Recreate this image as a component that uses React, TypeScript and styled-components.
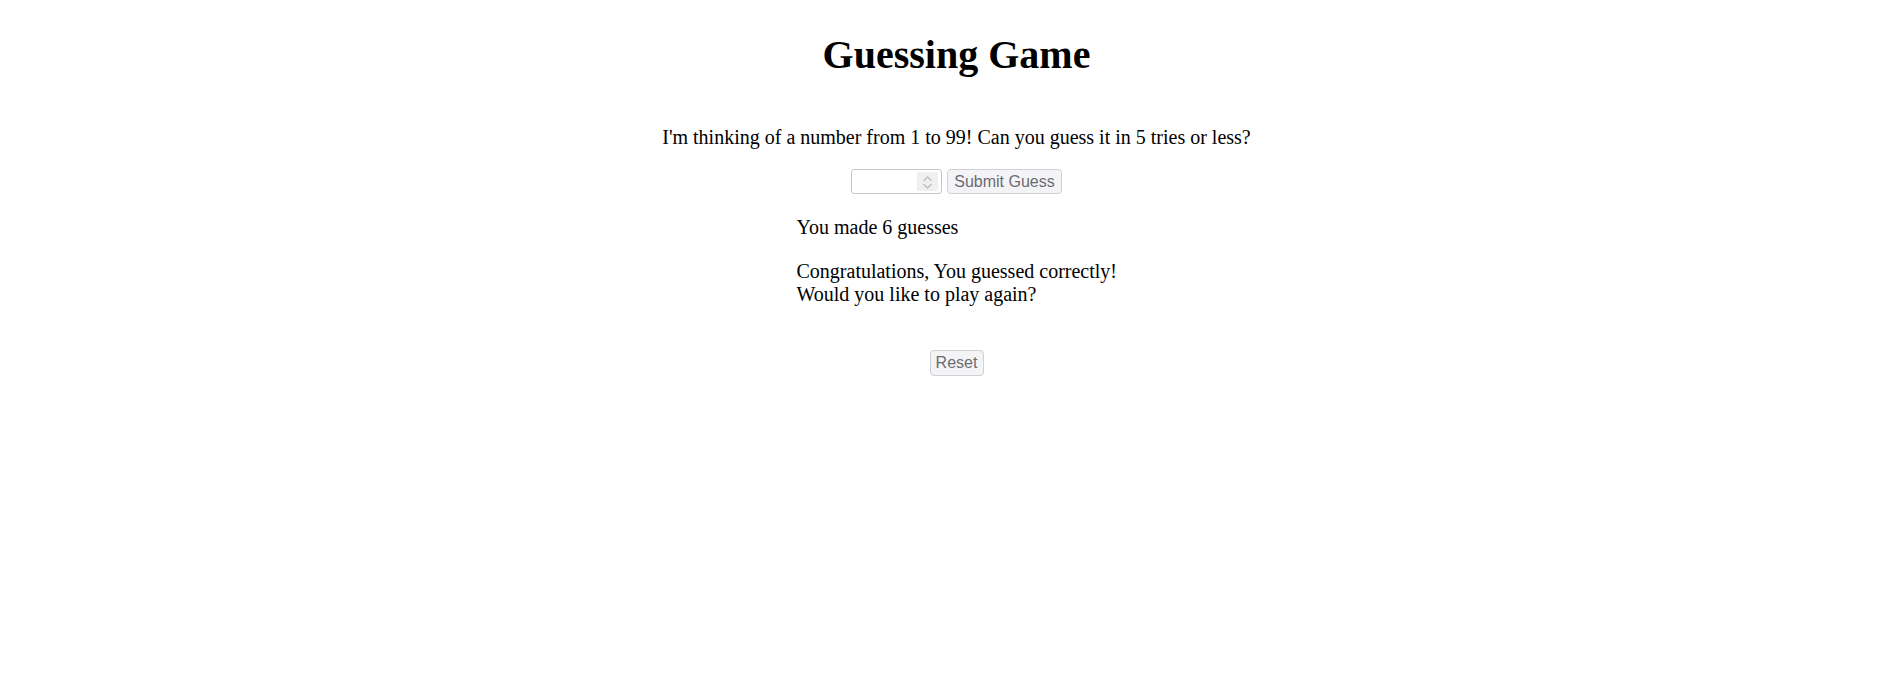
import * as React from "react";
import styled, { createGlobalStyle } from "styled-components";

const GlobalStyle = createGlobalStyle`
  body {
    margin: 0;
    background: #ffffff;
    color: #000000;
    font-family: "Liberation Serif", "Times New Roman", serif;
  }
`;

const GameContainer = styled.section`
  display: flex;
  flex-direction: column;
  align-items: center;
  padding: 32px 0 0 34px;
`;

const Title = styled.h1`
  margin: 0;
  font-size: 40px;
  line-height: 46px;
  font-weight: bold;
`;

const Intro = styled.p`
  margin: 48px 0 0;
  font-size: 20px;
  line-height: 23px;
`;

const GuessForm = styled.form`
  display: flex;
  gap: 5px;
  margin-top: 20px;
  height: 25px;
`;

const NumberField = styled.div`
  box-sizing: border-box;
  display: flex;
  width: 91px;
  height: 25px;
  padding: 2px 3px 2px 2px;
  border: 1px solid #c6c6cc;
  border-radius: 3px;
  background: #ffffff;
`;

const NumberInput = styled.input`
  flex: 1 1 0;
  width: 0;
  min-width: 0;
  border: none;
  outline: none;
  background: transparent;
  font-family: "Liberation Sans", Arial, sans-serif;
  font-size: 16px;
  padding: 0 2px;
`;

const Spinner = styled.div`
  flex: none;
  width: 21px;
  background: #f0f0f2;
  display: flex;
  align-items: center;
  justify-content: center;
`;

const GameButton = styled.button<{ $width: number; $height: number }>`
  box-sizing: border-box;
  width: ${(p) => p.$width}px;
  height: ${(p) => p.$height}px;
  padding: 0;
  font-family: "Liberation Sans", Arial, sans-serif;
  font-size: 16px;
  color: #6b6b73;
  background: #f4f4f6;
  border: 1px solid #d0d0d6;
  border-radius: 4px;
`;

const Results = styled.div`
  width: 320px;
  margin-top: 22px;
  text-align: left;
  white-space: nowrap;
  font-size: 20px;
  line-height: 23px;
`;

const ResultLine = styled.p<{ $gap?: number }>`
  margin: ${(p) => p.$gap ?? 0}px 0 0;
`;

const ResetRow = styled.div`
  margin-top: 44px;
`;

const SpinnerIcon = () => (
  <svg width="21" height="21" viewBox="0 0 21 21" fill="none">
    <polyline
      points="6.5,10 10.5,6 14.5,10"
      stroke="#bdbdc3"
      strokeWidth="1.3"
    />
    <polyline
      points="6.5,13 10.5,17 14.5,13"
      stroke="#bdbdc3"
      strokeWidth="1.3"
    />
  </svg>
);

export const App = () => {
  const guesses = 6;

  return (
    <>
      <GlobalStyle />
      <GameContainer>
        <Title>Guessing Game</Title>
        <Intro>
          I'm thinking of a number from 1 to 99! Can you guess it in 5 tries or
          less?
        </Intro>
        <GuessForm onSubmit={(e) => e.preventDefault()}>
          <NumberField>
            <NumberInput type="text" inputMode="numeric" disabled />
            <Spinner>
              <SpinnerIcon />
            </Spinner>
          </NumberField>
          <GameButton type="submit" $width={115} $height={25} disabled>
            Submit Guess
          </GameButton>
        </GuessForm>
        <Results>
          <ResultLine>You made {guesses} guesses</ResultLine>
          <ResultLine $gap={21}>
            Congratulations, You guessed correctly!
            <br />
            Would you like to play again?
          </ResultLine>
        </Results>
        <ResetRow>
          <GameButton type="button" $width={54} $height={26}>
            Reset
          </GameButton>
        </ResetRow>
      </GameContainer>
    </>
  );
};

export default App;
